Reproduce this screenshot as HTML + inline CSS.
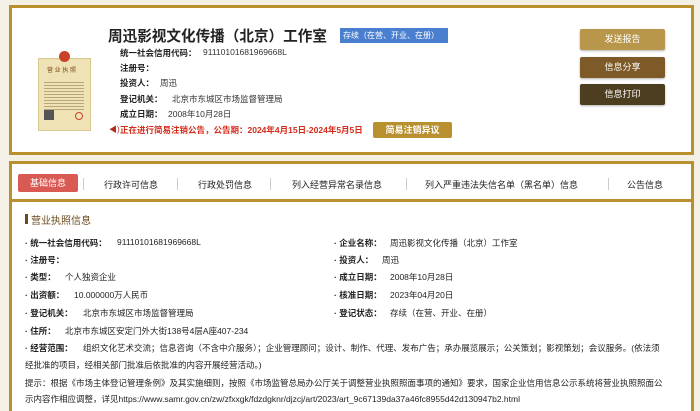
<!DOCTYPE html>
<html style="width:700px;height:411px;overflow:hidden"><head><meta charset="utf-8">
<style>
*{margin:0;padding:0;box-sizing:border-box}
html,body{width:700px;height:411px;overflow:hidden}
body{background:#f4f0e6;font-family:"Liberation Sans","Noto Sans CJK SC",sans-serif;color:#222;position:relative}
.a{position:absolute;white-space:nowrap}
.card1{position:absolute;left:9px;top:5px;width:685px;height:150px;border:3px solid #b8902f;background:#fff}
.card2{position:absolute;left:9px;top:161px;width:685px;height:300px;border:3px solid #b8902f;border-bottom:none;background:#fff}
.tabline{position:absolute;left:12px;top:199px;width:679px;height:3px;background:#b8902f}
.btn{position:absolute;left:580px;width:85px;height:21px;color:#fff;font-size:9px;text-align:center;line-height:21px;border-radius:2px;box-shadow:0 1px 2px rgba(0,0,0,.3)}
.lab{font-size:8.5px;font-weight:bold;color:#222}
.val{font-size:8.5px;color:#333}
.s{font-size:8.5px;color:#222}
.sb{font-size:8.5px;color:#222;font-weight:bold}
.tab{font-size:9px;color:#222;top:178px}
.sep{position:absolute;top:178px;width:1px;height:12px;background:#ccc}
</style></head><body>
<div class="card1"></div>
<div class="card2"></div>
<div class="tabline"></div>

<div class="a" style="left:38px;top:58px;width:53px;height:73px;background:#efe2b4;border:1px solid #d9c98e"></div>
<div class="a" style="left:59px;top:51px;width:11px;height:11px;border-radius:50%;background:#c8432a"></div>
<div class="a" style="left:47px;top:65px;font-size:6px;color:#7a4a1a">营 业 执 照</div>
<div class="a" style="left:44px;top:80px;width:40px;height:30px;background:repeating-linear-gradient(#efe2b4 0 2px,#b9a77a 2px 3px)"></div>
<div class="a" style="left:44px;top:110px;width:10px;height:10px;background:#555"></div>
<div class="a" style="left:75px;top:112px;width:8px;height:8px;border-radius:50%;border:1px solid #c8432a"></div>

<div class="a" style="left:108px;top:25px;font-size:14.6px;font-weight:bold;color:#222">周迅影视文化传播（北京）工作室</div>
<div class="a" style="left:340px;top:28px;width:108px;height:15px;background:#4a7fd0;color:#fff;font-size:8px;line-height:15px;padding-left:3px">存续（在营、开业、在册）</div>

<div class="a lab" style="left:120px;top:47px">统一社会信用代码：</div><div class="a val" style="left:203px;top:47px">91110101681969668L</div>
<div class="a lab" style="left:120px;top:62px">注册号：</div>
<div class="a lab" style="left:120px;top:77px">投资人：</div><div class="a val" style="left:160px;top:77px">周迅</div>
<div class="a lab" style="left:120px;top:93px">登记机关：</div><div class="a val" style="left:172px;top:93px">北京市东城区市场监督管理局</div>
<div class="a lab" style="left:120px;top:108px">成立日期：</div><div class="a val" style="left:168px;top:108px">2008年10月28日</div>
<div class="a" style="left:109px;top:124px;font-size:8px;color:#b03020">◀)</div>
<div class="a" style="left:120px;top:124px;font-size:8.5px;font-weight:bold;color:#d42a1a">正在进行简易注销公告，公告期：2024年4月15日-2024年5月5日</div>
<div class="a" style="left:373px;top:122px;width:79px;height:16px;background:#b8902f;color:#fff;font-size:9px;font-weight:bold;text-align:center;line-height:16px;border-radius:2px">简易注销异议</div>

<div class="btn" style="top:29px;background:#b8964a">发送报告</div>
<div class="btn" style="top:57px;background:#7d5a27">信息分享</div>
<div class="btn" style="top:84px;background:#4e3e20">信息打印</div>

<div class="a" style="left:18px;top:174px;width:60px;height:18px;background:#d95a52;color:#fff;font-size:9px;text-align:center;line-height:18px;border-radius:2px">基础信息</div>
<div class="sep" style="left:83px"></div>
<div class="a tab" style="left:104px">行政许可信息</div>
<div class="sep" style="left:177px"></div>
<div class="a tab" style="left:198px">行政处罚信息</div>
<div class="sep" style="left:270px"></div>
<div class="a tab" style="left:292px">列入经营异常名录信息</div>
<div class="sep" style="left:406px"></div>
<div class="a tab" style="left:425px">列入严重违法失信名单（黑名单）信息</div>
<div class="sep" style="left:608px"></div>
<div class="a tab" style="left:627px">公告信息</div>

<div class="a" style="left:25px;top:214px;width:3px;height:10px;background:#6b4a1e"></div>
<div class="a" style="left:31px;top:212px;font-size:10px;color:#6b4a1e">营业执照信息</div>

<div class="a sb" style="left:25px;top:237px">· 统一社会信用代码：</div><div class="a s" style="left:117px;top:237px">91110101681969668L</div>
<div class="a sb" style="left:334px;top:237px">· 企业名称：</div><div class="a s" style="left:390px;top:237px">周迅影视文化传播（北京）工作室</div>
<div class="a sb" style="left:25px;top:254px">· 注册号：</div>
<div class="a sb" style="left:334px;top:254px">· 投资人：</div><div class="a s" style="left:382px;top:254px">周迅</div>
<div class="a sb" style="left:25px;top:271px">· 类型：</div><div class="a s" style="left:65px;top:271px">个人独资企业</div>
<div class="a sb" style="left:334px;top:271px">· 成立日期：</div><div class="a s" style="left:390px;top:271px">2008年10月28日</div>
<div class="a sb" style="left:25px;top:289px">· 出资额：</div><div class="a s" style="left:74px;top:289px">10.000000万人民币</div>
<div class="a sb" style="left:334px;top:289px">· 核准日期：</div><div class="a s" style="left:390px;top:289px">2023年04月20日</div>
<div class="a sb" style="left:25px;top:307px">· 登记机关：</div><div class="a s" style="left:83px;top:307px">北京市东城区市场监督管理局</div>
<div class="a sb" style="left:334px;top:307px">· 登记状态：</div><div class="a s" style="left:390px;top:307px">存续（在营、开业、在册）</div>
<div class="a sb" style="left:25px;top:325px">· 住所：</div><div class="a s" style="left:65px;top:325px">北京市东城区安定门外大街138号4层A座407-234</div>
<div class="a sb" style="left:25px;top:342px">· 经营范围：</div><div class="a s" style="left:83px;top:342px">组织文化艺术交流；信息咨询（不含中介服务）；企业管理顾问；设计、制作、代理、发布广告；承办展览展示；公关策划；影视策划；会议服务。(依法须</div>
<div class="a s" style="left:25px;top:359px">经批准的项目，经相关部门批准后依批准的内容开展经营活动。)</div>
<div class="a s" style="left:25px;top:377px">提示：根据《市场主体登记管理条例》及其实施细则，按照《市场监管总局办公厅关于调整营业执照照面事项的通知》要求，国家企业信用信息公示系统将营业执照照面公</div>
<div class="a s" style="left:25px;top:393px">示内容作相应调整，详见https://www.samr.gov.cn/zw/zfxxgk/fdzdgknr/djzcj/art/2023/art_9c67139da37a46fc8955d42d130947b2.html</div>
</body></html>
